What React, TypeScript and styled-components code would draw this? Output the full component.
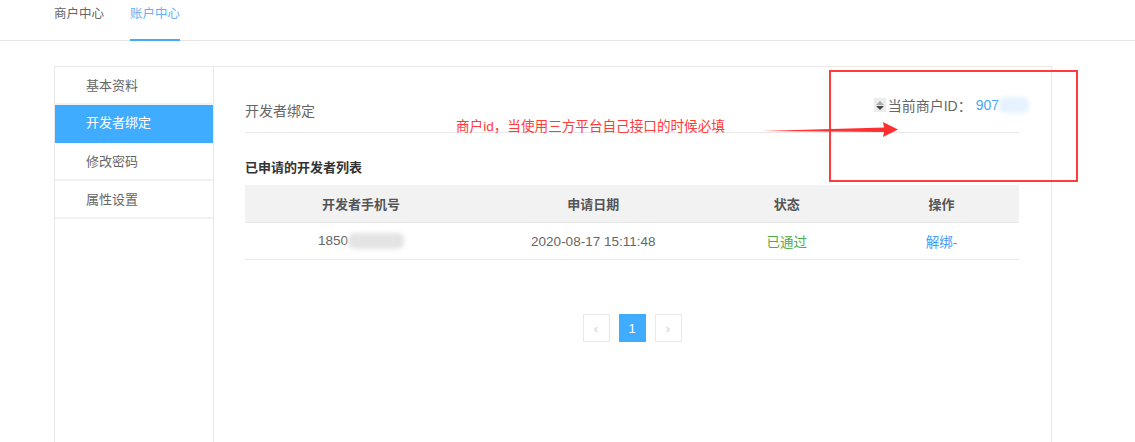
import styled, { createGlobalStyle, css } from "styled-components";

const GlobalStyle = createGlobalStyle`
	html, body {
		margin: 0;
		padding: 0;
		background: #fff;
	}
	body {
		font-family: "Liberation Sans", "Noto Sans CJK SC", sans-serif;
		color: #555;
		font-size: 13px;
	}
	#root {
		height: 442px;
		overflow: hidden;
	}
`;

const Page = styled.div`
	height: 442px;
	display: flex;
	flex-direction: column;
	position: relative;
`;

const TopNav = styled.div`
	display: flex;
	gap: 26px;
	height: 40px;
	padding-left: 54px;
	border-bottom: 1px solid #e6e6e6;
`;

const NavTab = styled.div<{ $active?: boolean }>`
	box-sizing: border-box;
	height: 41px;
	padding-top: 4px;
	font-size: 12.5px;
	line-height: 20px;
	color: #666;
	${({ $active }) =>
		$active &&
		css`
			color: #5db3f7;
			border-bottom: 2px solid #45aaf5;
		`}
`;

const Main = styled.div`
	flex: 1;
	padding: 25px 0 0 54px;
	display: flex;
`;

const Panel = styled.div`
	width: 998px;
	box-sizing: border-box;
	border: 1px solid #e8e8e8;
	border-bottom: none;
	display: flex;
`;

const Sidebar = styled.div`
	width: 158px;
	border-right: 1px solid #e8e8e8;
	display: flex;
	flex-direction: column;
`;

const MenuItem = styled.div<{ $active?: boolean }>`
	height: 36px;
	line-height: 38px;
	padding-left: 31px;
	font-size: 13px;
	color: #666;
	border-bottom: 2px solid #f2f2f2;
	${({ $active }) =>
		$active &&
		css`
			background: #3facff;
			color: #fff;
			border-bottom-color: #3facff;
			line-height: 36px;
		`}
`;

const Content = styled.div`
	flex: 1;
	padding: 21px 32px 0 31px;
	display: flex;
	flex-direction: column;
`;

const Header = styled.div`
	height: 44px;
	display: flex;
	align-items: center;
	justify-content: space-between;
	border-bottom: 1px solid #e8e8e8;
`;

const HeaderTitle = styled.div`
	font-size: 14px;
	color: #666;
`;

const MerchantId = styled.div`
	display: flex;
	align-items: center;
	margin-right: -10px;
	padding-bottom: 10px;
	font-size: 14px;
	color: #666;
`;

const Spinner = styled.span`
	width: 12px;
	height: 14px;
	background: #ececec;
	margin-right: 2px;
	display: inline-flex;
	flex-direction: column;
	align-items: center;
	justify-content: center;
	gap: 1px;
`;

const Tri = styled.span<{ $down?: boolean }>`
	width: 0;
	height: 0;
	border-left: 4px solid transparent;
	border-right: 4px solid transparent;
	${({ $down }) =>
		$down
			? css`
					border-top: 4px solid #444;
				`
			: css`
					border-bottom: 4px solid #aaa;
				`}
`;

const IdValue = styled.span`
	color: #49a7f5;
	margin-left: 4px;
`;

const Blur = styled.span<{ $tone: string; $w: number }>`
	display: inline-block;
	width: ${({ $w }) => $w}px;
	height: 16px;
	border-radius: 6px;
	background: ${({ $tone }) => $tone};
	filter: blur(2px);
	vertical-align: middle;
`;

const SectionTitle = styled.div`
	margin-top: 24px;
	font-size: 13px;
	font-weight: bold;
	color: #333;
`;

const Table = styled.table`
	margin-top: 9px;
	width: 100%;
	border-collapse: collapse;
	font-size: 13px;
`;

const Th = styled.th`
	height: 37px;
	padding: 0;
	background: #f2f2f2;
	font-weight: bold;
	color: #555;
	border-bottom: 1px solid #e8e8e8;
`;

const Td = styled.td<{ $color?: string }>`
	height: 36px;
	padding: 0;
	text-align: center;
	font-size: 13.5px;
	color: ${({ $color }) => $color || "#666"};
	border-bottom: 1px solid #e8e8e8;
`;

const Pager = styled.div`
	margin-top: 54px;
	display: flex;
	justify-content: center;
	gap: 9px;
`;

const PageBtn = styled.div<{ $active?: boolean }>`
	box-sizing: border-box;
	width: 27px;
	height: 28px;
	border: 1px solid #e8e8e8;
	display: flex;
	align-items: center;
	justify-content: center;
	color: #d0d0d0;
	font-size: 13px;
	${({ $active }) =>
		$active &&
		css`
			background: #3facff;
			border-color: #3facff;
			color: #fff;
		`}
`;

const Note = styled.div`
	position: absolute;
	left: 456px;
	top: 115px;
	font-size: 13.6px;
	color: #ff3a3a;
	white-space: nowrap;
`;

const Overlay = styled.svg`
	position: absolute;
	left: 0;
	top: 0;
	pointer-events: none;
`;

export default function App() {
	return (
		<Page>
			<GlobalStyle />
			<TopNav>
				<NavTab>商户中心</NavTab>
				<NavTab $active>账户中心</NavTab>
			</TopNav>
			<Main>
				<Panel>
					<Sidebar>
						<MenuItem>基本资料</MenuItem>
						<MenuItem $active>开发者绑定</MenuItem>
						<MenuItem>修改密码</MenuItem>
						<MenuItem>属性设置</MenuItem>
					</Sidebar>
					<Content>
						<Header>
							<HeaderTitle>开发者绑定</HeaderTitle>
							<MerchantId>
								<Spinner>
									<Tri />
									<Tri $down />
								</Spinner>
								当前商户ID：
								<IdValue>907</IdValue>
								<Blur $tone="#e6f2ff" $w={30} />
							</MerchantId>
						</Header>
						<SectionTitle>已申请的开发者列表</SectionTitle>
						<Table>
							<thead>
								<tr>
									<Th style={{ width: "30%" }}>开发者手机号</Th>
									<Th style={{ width: "30%" }}>申请日期</Th>
									<Th style={{ width: "20%" }}>状态</Th>
									<Th style={{ width: "20%" }}>操作</Th>
								</tr>
							</thead>
							<tbody>
								<tr>
									<Td>
										1850
										<Blur $tone="#e4e4e4" $w={56} />
									</Td>
									<Td>2020-08-17 15:11:48</Td>
									<Td $color="#4cae4c">已通过</Td>
									<Td $color="#3a9dff">解绑-</Td>
								</tr>
							</tbody>
						</Table>
						<Pager>
							<PageBtn>‹</PageBtn>
							<PageBtn $active>1</PageBtn>
							<PageBtn>›</PageBtn>
						</Pager>
					</Content>
				</Panel>
			</Main>
			<Note>商户id，当使用三方平台自己接口的时候必填</Note>
			<Overlay width="1135" height="442">
				<rect x="830" y="71" width="247" height="110" fill="none" stroke="#ff3b3b" strokeWidth="2" />
				<polygon points="760,131 884,127.5 883,122 898,129.5 883,137 884,132" fill="#ff3030" />
			</Overlay>
		</Page>
	);
}
